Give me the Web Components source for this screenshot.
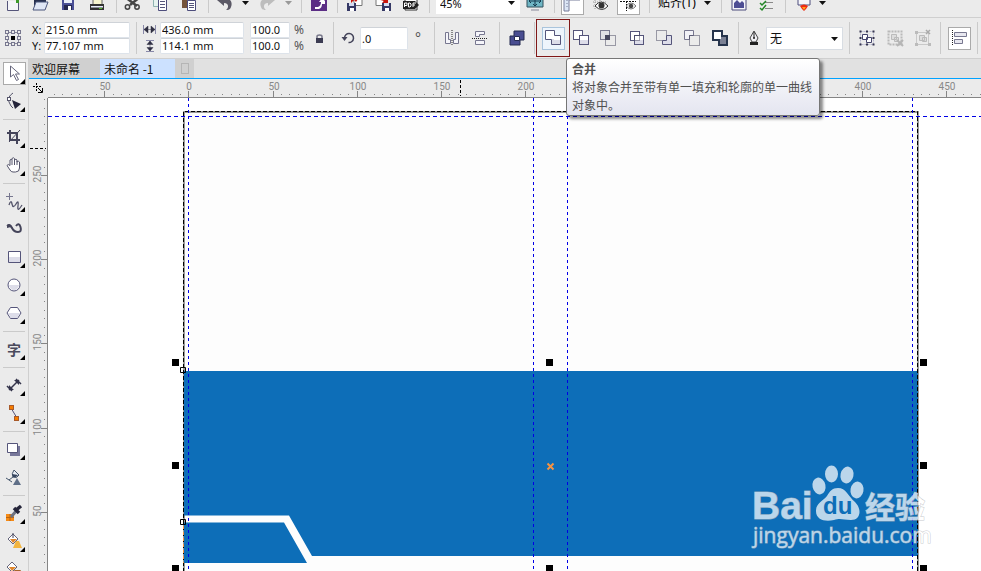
<!DOCTYPE html>
<html lang="zh-CN">
<head>
<meta charset="utf-8">
<title>未命名 -1</title>
<style>
html,body{margin:0;height:100%;overflow:hidden}
body{font:11px/16px "Noto Sans","Noto Sans CJK SC",sans-serif;color:#111;background:#ebebeb}
</style>
</head>
<body>
<draw-app></draw-app>
<script>
const INK = '#55557a';
const sq = (x, y, s, extra = '') => `<rect x="${x}" y="${y}" width="${s}" height="${s}" ${extra}/>`;
const box = 'fill="#fff" stroke="#55557a"';
const dot = 'fill="none" stroke="#44445c" stroke-dasharray="1 1"';
const ICONS = {
  new: `<path d="M2.500 6v9.500h11V6" fill="#f4f4f8" stroke="${INK}"/><path d="M9 3h7v2h-2v3h-3V5H9z" fill="#3c9a2b"/>`,
  open: `<path d="M2 14V2h6l1 2h5v4" fill="#27304f"/><path d="M4 7h12l-3 8H1z" fill="#dfe6f5" stroke="#4b567c"/>`,
  save: `<path d="M2 1h12v14H2z" fill="#4a4f96"/><path d="M4 1h8v7H4z" fill="#e8edf8"/><path d="M4 10h8v5H4z" fill="#252850"/><path d="M8 11h3v4H8z" fill="#fff"/>`,
  print: `<path d="M4 1h9v9H4z" fill="#f7f5cf" stroke="#666"/><path d="M1 9h14v6H1z" fill="#333"/><path d="M2 11h12v1.500H2z" fill="#e8eefa"/><path d="M10 13h3v1h-3z" fill="#55b72d"/>`,
  cut: `<path d="M0 2l12 9M15 2L5 10" stroke="#444" stroke-width="2.500"/><circle cx="2.500" cy="12" r="2.200" fill="none" stroke="#444" stroke-width="1.500"/><circle cx="12" cy="12" r="2.200" fill="none" stroke="#444" stroke-width="1.500"/>`,
  copy: `<path d="M1.500.5h9v11h-9z" fill="#e6f3ef" stroke="#8fb3b0"/><path d="M6.500 3.500h8v12h-8z" fill="#fff" stroke="#4d4d7c"/><path d="M8 6.500h5M8 9.500h5M8 12.500h5" stroke="#55557a"/>`,
  paste: `<path d="M1 0h11v13H1z" fill="#74533a"/><path d="M3 0h6v4H3z" fill="#d4c9bb"/><path d="M6.500 5.500h8v10h-8z" fill="#fff" stroke="#4d4d7c"/><path d="M8 8.500h5M8 10.500h5M8 12.500h5" stroke="#55557a"/>`,
  undo: `<path d="M0 5l7-5v3c6 0 9 4 7 9-1 3-3 3-5 3 3-2 3-7-2-7v3z" fill="#5b5966"/>`,
  redo: `<path d="M16 5L9 0v3C3 3 0 7 2 12c1 3 3 3 5 3-3-2-3-7 2-7v3z" fill="#bdbdbd"/>`,
  launch: `<path d="M0 0h16v16H0z" fill="#5b2d85"/><path d="M4 14h4q3-1 3-5h3V6L11 3 8 7h2q0 4-3 5H4z" fill="#fff"/>`,
  import: `<path d="M6 3.500h9v7H8z" fill="#fff" stroke="#777"/><path d="M4 0h10l-5 7-2-2-3 3z" fill="#c9150c"/><path d="M0 8h9v8H0z" fill="#353865"/><path d="M2 8h5v3H2z" fill="#d4daf0"/><path d="M3 13h4v3H3z" fill="#fff"/>`,
  export: `<path d="M1 3.500h8v7H1z" fill="#fff" stroke="#777"/><path d="M2 4l6-5 2 3 3-3v9H7l2-2z" fill="#c9150c"/><path d="M7 8h9v8H7z" fill="#353865"/><path d="M9 8h5v3H9z" fill="#d4daf0"/><path d="M10 13h4v3h-4z" fill="#fff"/>`,
  pdf: `<path d="M2 1h9l3 4v10H2z" fill="#fff" stroke="#333"/><path d="M0 6h12l4 4-4 4H0z" fill="#222"/><path d="M1.500 12V8H4v2.500H2M5.500 8v4H7l1-1V9L7 8zM10 12V8h3M10 10h2" fill="none" stroke="#fff"/>`,
  fit: `<path d="M0 0h16v12H0z" fill="#6fb6c5" stroke="#33505c"/><path d="M8 1v10M2 6h12M6 3l2-2 2 2M6 9l2 2 2-2M4 4L2 6l2 2M12 4l2 2-2 2" fill="none" stroke="#163b50"/><path d="M4 14h8v2H4z" fill="#b9b9c2"/>`,
  rulers: `<path d="M0 0h16v5H5v11H0z" fill="#dce6f5" stroke="#777d99"/><path d="M3 2v12M6 1v3M9 1v3M12 1v3" stroke="#777d99" stroke-dasharray="1 2"/>`,
  eyegrid: `<path d="M1 3h14M1 7h14M1 11h6M3 1v14M8 1v12" stroke="#999" stroke-dasharray="1 1"/><path d="M3 11q6-8 13 0-6 7-13 0z" fill="#fff" stroke="#333"/><circle cx="9.500" cy="10.500" r="3" fill="#333"/>`,
  eyeguide: `<path d="M0 6.500h16M6.500 0v16" stroke="#111" stroke-dasharray="2 1"/><path d="M6 11q5-6 10 0-5 6-10 0z" fill="#eee" stroke="#777"/><circle cx="11" cy="11" r="2.200" fill="#444"/>`,
  options: `<path d="M1 0h14v15H1z" fill="#f4f4fa" stroke="#4d4d7c"/><path d="M3 13V8l3-3 3 3 2-2 2 2v5z" fill="#4d4d94"/>`,
  checks: `<path d="M7 2.500h8M7 7.500h8M7 13.500h8" stroke="#888"/><path d="M2 2l2 2 4-4M2 8l2 2 4-4M2 13l2 2 4-5" fill="none" stroke="#238627" stroke-width="1.500"/>`,
  present: `<path d="M2 0h12v10H2z" fill="#f5f5fa" stroke="#4d4d7c"/><path d="M4 11q4-3 8 0l-2 3-2 2-2-2z" fill="#ed2b12"/><path d="M6 12h4l-2 3z" fill="#ffa01e"/>`,
  origin: `<path d="M2.500 2.500h11v11h-11z" fill="none" stroke="#8a8a9b"/>` + [0,6,12].map(x => [0,6,12].map(y => sq(x + .5, y + .5, 3, x === 6 && y === 6 ? 'fill="#000" stroke="#000"' : 'fill="#ebebeb" stroke="#77778f"')).join('')).join(''),
  width: `<path d="M1.500 3v9M13.500 3v9" stroke="#8888a8"/><path d="M2 7.500h11M6 4v7l-4-3.500zM9 4v7l4-3.500z" fill="#2f2f42" stroke="#2f2f42" stroke-width=".5"/>`,
  height: `<path d="M4 2.500h8M4 13.500h8" stroke="#8888a8"/><path d="M8 3v10M5 6.500h6L8 3zM5 9.500h6L8 13z" fill="#2f2f42" stroke="#2f2f42" stroke-width=".5"/>`,
  lock: `<path d="M6 8V6.500Q6 5 8.500 5T11 6.500V8" fill="none" stroke="#77778a" stroke-width="1.500"/><path d="M5 8h7v5H5z" fill="#3b3b52"/>`,
  rotate: `<path d="M4.500 8a4.500 4.500 0 1 1 4 4.500" fill="none" stroke="#44445a" stroke-width="1.500"/><path d="M1.500 7h6l-3 4z" fill="#44445a"/>`,
  mirrorh: `<path d="M1.500 2.500h3v7h2v4h-5zM14.500 2.500h-3v7h-2v4h5z" fill="#f5f5fa" stroke="#77778f"/><path d="M8 0v16" stroke="#222" stroke-dasharray="1 1"/>`,
  mirrorv: `<path d="M3.500 1.500h9v3h-5v2h-4zM3.500 14.500h9v-4h-9z" fill="#f5f5fa" stroke="#77778f"/><path d="M0 8.500h16" stroke="#222" stroke-dasharray="1 1"/>`,
  combine: `<path d="M5 1h10v9h-4v5H1V6h4z" fill="#494d91" stroke="#252a51"/><path d="M5.500 6.500h5v4h-5z" fill="#fff" stroke="#252a51"/>`,
  weld: `<path d="M.5.500h9v5h6v9h-9v-5h-6z" ${box}/><path d="M9 10h6v4H7V9h2z" fill="#dddde9"/>`,
  trim: `${sq(.5, .5, 9, box)}${sq(6.500, 5.500, 9, box)}<path d="M7 10h8v4H7z" fill="#dddde9"/>`,
  intersect: `${sq(.5, .5, 9, 'fill="#dedee5" stroke="#77778f"')}${sq(5.500, 5.500, 10, dot)}${sq(5, 5, 5, 'fill="#45455f"')}`,
  simplify: `${sq(1.500, 1.500, 9, box)}${sq(5.500, 5.500, 9, box)}<path d="M6 10h8v4H6z" fill="#dddde9"/>${sq(5.500, 5.500, 5, dot)}`,
  front: `${sq(.5, .5, 10, dot)}<path d="M10.500 5.500h5v9h-9v-4h4z" fill="#dddde9" stroke="#55557a"/>`,
  back: `<path d="M.5.500h9v5h-4v4h-5z" fill="#f2f2f7" stroke="#77778f"/>${sq(5.500, 5.500, 10, dot)}`,
  boundary: `<path d="M1 1h9v5h5v9H7v-5H1z" fill="#7b8194" stroke="#26344c" stroke-width="2"/>${sq(2, 2, 7, 'fill="#fff"')}`,
  pen: `<path d="M8 1l4 7-2 4H6L4 8z" fill="#f1f1f5" stroke="#444"/><path d="M8 2v6" stroke="#222"/><circle cx="8" cy="8" r="1" fill="#222"/><path d="M4 12h8v3H4z" fill="#222"/>`,
  group: `<path d="M1.500 1.500h13v13h-13z" fill="none" stroke="#b4b4cc" stroke-dasharray="2 1"/>${[0,6.500,13].map(x => [0,6.500,13].map(y => x === 6.500 && y === 6.500 ? '' : sq(x + .5,y + .5,2,'fill="#35354f"')).join('')).join('')}<path d="M3.500 4.500h5v5h-5zM7.500 7.500h5v5h-5z" fill="#fff" stroke="#44446c"/>`,
  ungroup: `<path d="M1.500 1.500h13v13h-13z" fill="none" stroke="#b9b9b9" stroke-width="2" stroke-dasharray="2 1"/><path d="M4.500 4.500h5v5h-5zM7.500 7.500h4v4h-4z" fill="#ddd" stroke="#bbb"/><path d="M10 10l6 6m0-6l-6 6" stroke="#b5b5b5" stroke-width="2"/>`,
  ungroupall: `<path d="M1.500 2.500h12v12h-12z" fill="none" stroke="#c9c9c9"/>${sq(0,1,3,'fill="#bbb"')}${sq(0,13,3,'fill="#bbb"')}${sq(13,13,3,'fill="#bbb"')}<path d="M4.500 5.500h5v5h-5zM7.500 7.500h4v4h-4z" fill="#ddd" stroke="#bbb"/><path d="M11 0l4 4m0-4l-4 4" stroke="#aaa" stroke-width="1.500"/>`,
  align: `<path d="M1.500 0v16" stroke="#222" stroke-dasharray="1 1"/><path d="M3.500 2.500h12v4h-12zM3.500 9.500h8v4h-8z" fill="#e7e7ef" stroke="#77778f"/>`,
  pick: `<path d="M4.500 1v11l3-2.500 3 6 2-1-3-5.500h4z" fill="#fff" stroke="#66667c"/>`,
  shape: `<path d="M7 0Q1 4 3 9t4 6" fill="none" stroke="#55556b"/>${sq(1.500,4.500,3,'fill="#fff" stroke="#55556b"')}<path d="M6 7l9 4-6 5z" fill="#24243a"/>`,
  crop: `<path d="M4 1v10h10M1 4h10v11" fill="none" stroke="#44445a" stroke-width="2"/><path d="M3 13L14 1" stroke="#44445a"/>`,
  hand: `<path d="M4 13L1 8.500q1-2 3 0V3q1.500-1.500 2 0V1.500q1.500-1.500 2.500 0V3q1.500-1.500 2.500 0v2q1.500-1.500 2.500 0v6q0 4-4 4H7q-2 0-3-2z" fill="#fff" stroke="#55556b"/><path d="M6 3v5M8.500 3v5M11 4v4" stroke="#55556b"/>`,
  freehand: `<path d="M3.500 0v7M0 3.500h7" stroke="#77778f"/><path d="M3 12q2-6 3-1t4 0 2 2 4-1" fill="none" stroke="#55556b" stroke-width="1.300"/>`,
  artistic: `<path d="M1 5q3-2 5 2t6 4 2.500-5-4.500-1" fill="none" stroke="#44445a" stroke-width="2"/><path d="M1 4q2-2 4 0l2 3-2-1-4 1z" fill="#44445a"/>`,
  rect: `<path d="M2.500 2.500h12v11h-12z" ${box}/><path d="M3 8h11v5H3z" fill="#dddde9"/>`,
  ellipse: `<circle cx="8" cy="8" r="6" ${box}/><path d="M3 8h10q-1 5-5 5T3 8z" fill="#dddde9"/>`,
  polygon: `<path d="M4.500 2.500h7L15 8l-3.500 5.500h-7L1 8z" ${box}/><path d="M2 8h12l-3 5H5z" fill="#dddde9"/>`,
  dimension: `<path d="M3 13L13 3M1 9l5 5M10 2l5 5" stroke="#33334a" stroke-width="1.500"/><path d="M3 13V8l5 5zM13 3v5L8 3z" fill="#33334a"/>`,
  connector: `<path d="M5 3l6 10" stroke="#55557a"/>${sq(3.500,.5,4,'fill="#f57c00" stroke="#a85a2a"')}${sq(8.500,11.500,4,'fill="#f57c00" stroke="#a85a2a"')}`,
  shadow: `<path d="M4 5h10v10H4z" fill="#77779a"/><path d="M1.500 2.500h10v9h-10z" ${box}/>`,
  glass: `<path d="M8 1l5 5q-2 4-6 2-2-3 1-7zM7 8l-4 3M0 9l6 4" fill="#e9eef5" stroke="#44556b"/><path d="M6 5l6 1q-2 3-5 2z" fill="#35445e"/><path d="M11 9l4 7H7z" fill="#5f6f88"/>`,
  dropper: `<path d="M0 9h8v7H0z" fill="#f58a16"/><path d="M0 12.500h8M4 9v7" stroke="#b8640f"/><path d="M5 12l6-7" stroke="#6d7281" stroke-width="3"/><path d="M8 3l5 5M10 5l5-4" stroke="#25253a" stroke-width="3.500"/>`,
  fill: `<path d="M2 6l5-5 5 5-5 5z" fill="#fff" stroke="#66667c"/><path d="M4 6h7l-4 4z" fill="#e0862b"/><path d="M7 0v5" stroke="#44445a"/><path d="M10 8h3l3 7H7z" fill="#f3b53f"/>`,
  smartfill: `<path d="M1 6l5-5 5 5-5 5z" fill="#fff" stroke="#66667c"/><path d="M3 6h7l-4 4z" fill="#e0862b"/><path d="M8.500 9.500h6v6h-6z" fill="#eee" stroke="#a8662e"/>`,
};

function define(name, html, setup) {
  const template = document.createElement('template');
  template.innerHTML = html;
  customElements.define(name, class extends HTMLElement {
    constructor() {
      super();
      this.attachShadow({mode: 'open'}).append(template.content.cloneNode(true));
    }
    connectedCallback() { if (setup) setup(this, this.shadowRoot); }
  });
}

define('ui-icon', `<style>:host{display:block;width:16px;height:16px;flex:none}svg{display:block;overflow:visible}</style><svg width="16" height="16" viewBox="0 0 16 16" aria-hidden="true"></svg>`,
  (el, root) => { root.querySelector('svg').innerHTML = ICONS[el.getAttribute('name')] || ''; });

define('bar-divider', `<style>:host{display:flex;flex:none;align-self:stretch;justify-content:center;width:8px}i{width:1px;background:#cacaca}</style><i></i>`,
  (el) => { if (el.hasAttribute('w')) el.style.width = el.getAttribute('w') + 'px'; });

define('drop-caret', `<style>:host{display:flex;flex:none;justify-content:center;width:14px}button{border:0;padding:0;background:none;color:inherit;width:8px;height:12px;display:grid;place-items:center}svg{display:block}</style><button aria-label="展开"><svg width="7" height="4"><path d="M0 0h7L3.500 4z" fill="currentColor"/></svg></button>`,
  (el) => { if (el.hasAttribute('w')) el.style.width = el.getAttribute('w') + 'px'; });

define('tool-button', `<style>
:host{display:flex;flex:none;justify-content:center;align-items:center;width:28px;height:28px}
button{box-sizing:border-box;width:23px;height:23px;padding:0;border:1px solid transparent;background:none;display:grid;place-items:center;position:relative;font:inherit}
:host([pressed]) button{background:#fff;border-color:#aaa}
:host([hot]) button{background:#eef5fc;border-color:#a9c4dc}
.fly{display:none;position:absolute;right:0;bottom:0}
:host([flyout]) .fly{display:block}
</style><button><svg class="fly" width="5" height="5"><path d="M5 0v5H0z"/></svg></button>`,
  (el, root) => {
    if (el.hasAttribute('w')) el.style.width = el.getAttribute('w') + 'px';
    const button = root.querySelector('button');
    button.setAttribute('aria-label', el.getAttribute('label'));
    const icon = document.createElement('ui-icon');
    icon.setAttribute('name', el.getAttribute('icon'));
    button.prepend(icon);
  });

const tools = (list) => list.map(t => typeof t === 'number' ? `<bar-divider w="${t}"></bar-divider>` :
  t[0] === 'v' && t.length === 2 ? `<drop-caret w="${t[1]}"></drop-caret>` :
  `<tool-button icon="${t[0]}" label="${t[2]}" w="${t[1]}" ${t[3] || ''}></tool-button>`).join('');

define('standard-bar', `<style>
:host{display:flex;align-items:flex-end;height:17px;overflow:hidden;border-bottom:1px solid #cfcfcf}
.row{display:flex;align-items:center;height:28px;flex:1}
bar-divider{height:24px;align-self:flex-start}
.zoom{width:84px;height:22px;background:#fff;display:flex;align-items:center;flex:none}
input{width:66px;height:20px;border:0;padding:0 0 0 4px;background:none;font:inherit;color:inherit;box-sizing:border-box;outline:0}
.snap{width:42px;border:0;padding:0;background:none;font:12px/18px "Noto Sans","Noto Sans CJK SC",sans-serif;white-space:nowrap;flex:none}
.off{color:#999}
</style><div class="row">
${tools([['new',26,'新建'],['open',28,'打开'],['save',28,'保存'],['print',30,'打印'],8,['cut',26,'剪切'],['copy',28,'复制'],['paste',30,'粘贴'],8,['undo',26,'撤消'],['v',14],['redo',30,'重做']])}
<drop-caret class="off" w="12"></drop-caret>
${tools([14,['launch',22,'启动'],14,['import',22,'导入'],['export',34,'导出'],['pdf',22,'发布为 PDF'],14])}
<div class="zoom"><input aria-label="缩放级别" value="45%"><drop-caret w="18"></drop-caret></div>
${tools([['fit',30,'全屏预览'],8,['rulers',28,'显示标尺','pressed'],['eyegrid',28,'显示网格'],['eyeguide',28,'显示辅助线','pressed'],14])}
<button class="snap">贴齐(T)</button>
${tools([['v',18],10,['options',26,'选项'],['checks',28,'对象管理'],10,['present',28,'启动器'],['v',8]])}
</div>`);

define('number-field', `<style>:host{display:block;flex:none}input{display:block;box-sizing:border-box;width:100%;height:16px;border:1px solid #dde3ea;border-top-color:#cfd3d8;border-radius:2px;background:#fff;padding:0 1px;font:inherit;color:inherit;outline:0}:host([tall]) input{height:23px}</style><input>`,
  (el, root) => { const i = root.querySelector('input'); i.setAttribute('value', el.getAttribute('value')); i.setAttribute('aria-label', el.getAttribute('label')); });

define('tool-tip', `<style>
:host{display:block;box-sizing:border-box;width:254px;padding:1px 5px;border:1px solid #767676;border-radius:3px;background:linear-gradient(#fff,#e4e5f0);box-shadow:3px 3px 3px rgba(0,0,0,.45);font:12px/18px "Noto Sans CJK SC",sans-serif;color:#505050}
b{display:block}p{margin:0}
</style><b><slot name="title"></slot></b><p><slot></slot></p>`);

define('property-bar', `<style>
:host{display:flex;align-items:center;height:40px;border-bottom:1px solid #cfcfcf;position:relative;z-index:2}
bar-divider{height:32px;align-self:center}
.pair{display:grid;grid-template-rows:16px 16px;align-items:center;flex:none}
.pos{grid-template-columns:12px 86px;padding-left:6px}
.size{grid-template-columns:18px 84px}
.scale{grid-template-columns:40px 14px;padding-left:6px;column-gap:4px}
.angle{width:48px}
.deg{width:22px;text-align:center;font-size:14px;color:#555}
.pct{font-size:12px;color:#555}
.target{display:grid;place-items:center;width:32px;height:36px;border:1px solid #801818;position:relative;flex:none}
tool-tip{position:absolute;left:29px;top:38px}
.outline{position:relative;width:77px;height:23px;flex:none;display:flex;align-items:center;background:#fff;border:1px solid #d8dde3;box-sizing:border-box}
select{appearance:none;width:100%;border:0;background:none;padding:0 3px;font:12px/20px "Noto Sans CJK SC",sans-serif;color:#111;outline:0}
.outline drop-caret{position:absolute;right:1px;top:5px;pointer-events:none}
</style>
${tools([['origin',26,'对象原点']])}
<div class="pair pos"><span>X:</span><number-field label="X" value="215.0 mm"></number-field><span>Y:</span><number-field label="Y" value="77.107 mm"></number-field></div>
<bar-divider w="12"></bar-divider>
<div class="pair size"><ui-icon name="width"></ui-icon><number-field label="宽度" value="436.0 mm"></number-field><ui-icon name="height"></ui-icon><number-field label="高度" value="114.1 mm"></number-field></div>
<div class="pair scale"><number-field label="水平缩放" value="100.0"></number-field><span class="pct">%</span><number-field label="垂直缩放" value="100.0"></number-field><span class="pct">%</span></div>
${tools([['lock',22,'锁定比率'],6,['rotate',24,'旋转']])}
<number-field class="angle" tall label="旋转角度" value=".0"></number-field><span class="deg">°</span>
${tools([12,['mirrorh',24,'水平镜像'],['mirrorv',32,'垂直镜像'],6,['combine',30,'结合'],4])}
<div class="target"><tool-button icon="weld" label="合并" hot></tool-button><tool-tip role="tooltip"><span slot="title">合并</span>将对象合并至带有单一填充和轮廓的单一曲线对象中。</tool-tip></div>
${tools([['trim',22,'修剪'],['intersect',32,'相交'],['simplify',26,'简化'],['front',28,'移除后面对象'],['back',28,'移除前面对象'],['boundary',28,'创建边界'],8,['pen',24,'轮廓笔']])}
<div class="outline"><select aria-label="轮廓宽度"><option>无</option></select><drop-caret></drop-caret></div>
${tools([12,['group',24,'组合'],['ungroup',32,'取消组合'],['ungroupall',24,'取消全部组合'],10,['align',28,'对齐与分布','pressed'],8])}
`);

define('text-tool', `<style>:host{display:flex;flex:none;justify-content:center;align-items:center;height:28px;width:28px}button{width:23px;height:23px;border:0;padding:0;background:none;position:relative;font:bold 14px/22px "Noto Sans CJK SC",sans-serif;color:#4a4a5c}svg{position:absolute;right:1px;bottom:1px}</style><button aria-label="文本">字<svg width="5" height="5"><path d="M5 0v5H0z"/></svg></button>`);

const GROUPS = [
  [['pick','选择'],['shape','形状']],
  [['crop','裁剪'],['hand','平移']],
  [['freehand','手绘'],['artistic','艺术笔'],['rect','矩形'],['ellipse','椭圆形'],['polygon','多边形']],
  [['text','文本']],
  [['dimension','平行度量'],['connector','连接器']],
  [['shadow','阴影'],['glass','透明度']],
  [['dropper','颜色滴管'],['fill','交互式填充'],['smartfill','智能填充']],
];
define('tool-box', `<style>
:host{display:flex;flex-direction:column;width:28px;border-right:1px solid #cfcfcf;overflow:hidden;min-height:0}
hr{flex:none;box-sizing:border-box;width:22px;height:8px;margin:0 3px;border:0;background:linear-gradient(#cacaca,#cacaca) 0 4px/100% 1px no-repeat}
</style>${GROUPS.map(g => g.map(([n, l]) => n === 'text' ? '<text-tool></text-tool>' :
  `<tool-button icon="${n}" label="${l}" ${n === 'artistic' || n === 'glass' ? '' : 'flyout'} ${n === 'pick' ? 'pressed' : ''}></tool-button>`).join('')).join('<hr>')}`);

define('doc-tabs', `<style>
:host{display:flex;height:19px;background:#e1e1e1;border-bottom:1px solid #00a2ff}
button{border:0;font:12px/19px "Noto Sans CJK SC",sans-serif;text-align:left;padding:0 3px;background:#d0d0d0;color:#111}
.home{width:71px}.doc{width:75px;background:#cce1ff;padding-left:4px}
.add{width:19px;display:grid;place-items:center}
.add i{width:6px;height:9px;border:1px solid #b5b5b5}
</style><button class="home">欢迎屏幕</button><button class="doc">未命名 -1</button><button class="add" aria-label="新建文档"><i></i></button>`);

const UNIT = 84.2;
define('ruler-top', `<style>:host{display:block;height:18px;min-width:0;overflow:hidden;border-bottom:1px solid #858585}svg{display:block;width:100%;height:18px}text{font:10px Roboto,"Noto Sans",sans-serif;fill:#888}</style><svg></svg>`,
  (el, root) => {
    const draw = () => {
      let s = '';
      for (let i = -16; ; i++) {
        const x = Math.round(140.4 + i * UNIT / 10);
        if (x > el.clientWidth) break;
        if (x < 4) continue;
        const major = i % 10 === 0;
        s += `<path d="M${x}.5 ${major ? 12 : 15}v${major ? 6 : 1}" stroke="#858585"/>`;
        if (major) s += `<text x="${x + 1}" y="11" text-anchor="middle">${Math.abs(i * 5)}</text>`;
      }
      root.querySelector('svg').innerHTML = s + '<path d="M412.500 1v16" stroke="#000" stroke-dasharray="3 2"/>';
    };
    new ResizeObserver(draw).observe(el);
  });

define('ruler-side', `<style>:host{display:block;width:18px;border-right:1px solid #858585;min-height:0;overflow:hidden}svg{display:block;width:18px;height:100%}text{font:10px Roboto,"Noto Sans",sans-serif;fill:#888}</style><svg></svg>`,
  (el, root) => {
    const draw = () => {
      let s = '';
      for (let i = -9; ; i++) {
        const y = Math.round(77 + i * UNIT / 10), v = Math.abs(250 - i * 5);
        if (y > el.clientHeight) break;
        const major = i % 10 === 0;
        s += `<path d="M${major ? 12 : 15} ${y}.5h${major ? 6 : 1}" stroke="#858585"/>`;
        if (major) s += `<text transform="translate(12 ${y - 1})rotate(-90)" text-anchor="middle">${v}</text>`;
      }
      root.querySelector('svg').innerHTML = s + '<path d="M1 50.500h16" stroke="#000" stroke-dasharray="3 2"/>';
    };
    new ResizeObserver(draw).observe(el);
  });

define('site-mark', `<style>:host{display:block;width:180px;height:92px;opacity:.72}svg{display:block;overflow:visible}
text{font-family:"Liberation Sans","Noto Sans CJK SC",sans-serif;font-weight:bold;fill:#fff;stroke:#b4b8bc;stroke-width:1;paint-order:stroke}
.du{fill:#0d6eb8;stroke:none}.url{font-family:"Open Sans",sans-serif;font-weight:400}
</style><svg width="180" height="92" viewBox="0 0 180 92">
<text x="0" y="60" font-size="39">Bai</text>
<g fill="#fff"><ellipse cx="67" cy="27" rx="6.500" ry="8.500" transform="rotate(-12 67 27)"/><ellipse cx="79.500" cy="15" rx="6.500" ry="8.500"/><ellipse cx="95" cy="16" rx="6.500" ry="8.500" transform="rotate(12 95 16)"/><ellipse cx="105" cy="31" rx="6.500" ry="8.500" transform="rotate(10 105 31)"/>
<path d="M86 29c8 0 10 8 17 14 7 7 6 18-4 18-8 0-10-2-17 0-9 2-18 0-18-9 0-8 6-9 11-15 3-5 5-8 11-8z"/></g>
<text class="du" x="71" y="55" font-size="24">du</text>
<text x="113" y="59" font-size="30">经验</text>
<text class="url" x="1" y="84" font-size="21">jingyan.baidu.com</text></svg>`);

define('art-board', `<style>
:host{display:block;position:relative;background:#fff;overflow:hidden;min-width:0;min-height:0}
svg{display:block;width:100%;height:100%}
site-mark{position:absolute;left:704px;top:361px}
</style><svg></svg><site-mark></site-mark>`, (el, root) => {
  const handle = (x, y) => `<path d="M${x} ${y}h7v7h-7z"/>`;
  const node = y => `<path d="M180.500 ${y}.5h5v5h-5z" fill="none" stroke="#000"/>`;
  const guide = x => `<path d="M${x}.5 98V2000" stroke="#0000e6" stroke-dasharray="3 3"/>`;
  root.querySelector('svg').innerHTML = `<g transform="translate(-48 -98)">
<path d="M184 2000V112h734V2000" fill="#fdfdfd" stroke="#9a9a9a" stroke-width="2"/>
<path d="M184 371h734v185H312l-23-40.500H184zM184 522.500h100l23 40.500H184z" fill="#0d6eb8"/>
<path d="M183.500 2000V111.500h734V2000" fill="none" stroke="#000" stroke-dasharray="4 2"/>
${[188, 533, 567, 912].map(guide).join('')}
<path d="M48 116.500H4000" stroke="#0000e6" stroke-dasharray="4 3"/>
<path d="M183.500 526v37" stroke="#f59342" stroke-dasharray="3 3"/>
${[172, 546, 920].map(x => [359, 462, 565].map(y => x === 546 && y === 462 ? '' : handle(x, y)).join('')).join('')}
${node(367)}${node(519)}
<path d="M547.500 463.500l6 6m0-6l-6 6" stroke="#f59342" stroke-width="2"/></g>`;
});

define('draw-app', `<style>
:host{display:grid;grid-template:auto auto minmax(0,1fr)/minmax(0,1fr);height:100vh;background:#ebebeb}
.work{display:grid;grid-template:minmax(0,1fr)/auto minmax(0,1fr)}
.doc{display:grid;grid-template:auto auto minmax(0,1fr)/auto minmax(0,1fr);min-height:0}
doc-tabs{grid-column:1/-1}
.corner{display:grid;place-items:center}
</style>
<standard-bar></standard-bar><property-bar></property-bar>
<div class="work"><tool-box></tool-box><div class="doc"><doc-tabs></doc-tabs>
<div class="corner"><svg width="11" height="11" fill="none" stroke="#000"><path d="M0 3.500h8M3.500 0v8" stroke-dasharray="2 1"/><path d="M5 5l4 4M5 9.500h4.500V5"/></svg></div>
<ruler-top></ruler-top><ruler-side></ruler-side><art-board></art-board></div></div>`);
</script>
</body>
</html>
